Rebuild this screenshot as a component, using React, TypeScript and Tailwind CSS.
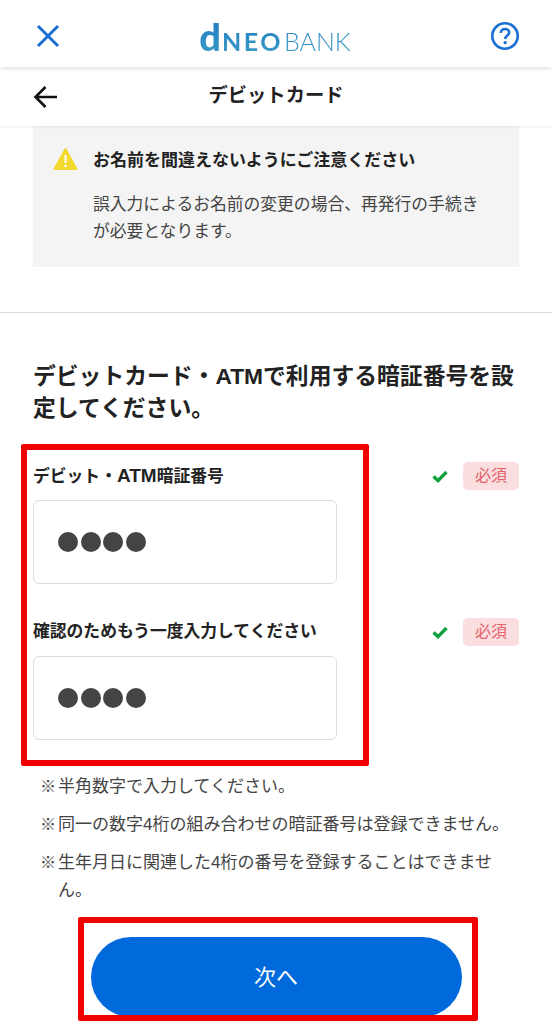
import React from 'react';

const font = { fontFamily: '"Liberation Sans", "Noto Sans CJK JP", sans-serif' };

const notes = [
  '半角数字で入力してください。',
  '同一の数字4桁の組み合わせの暗証番号は登録できません。',
  '生年月日に関連した4桁の番号を登録することはできません。',
];

function PinField({ label }: { label: React.ReactNode }) {
  return (
    <div>
      <div className="flex h-[28px] items-center justify-between">
        <span className="text-[16.8px] font-bold text-[#222]">{label}</span>
        <div className="flex items-center gap-[15px]">
          <svg width="16" height="13" viewBox="0 0 16 13" fill="none">
            <path d="M1.5 6.6 L6 10.6 L14.5 2" stroke="#0fa23c" strokeWidth="3.4" />
          </svg>
          <span className="flex h-[28px] w-[56px] items-center justify-center rounded-[5px] bg-[#fbdfe0] text-[16px] text-[#e5646c]">
            必須
          </span>
        </div>
      </div>
      <div className="mt-[10px] flex h-[84px] w-[304px] items-center gap-[2.5px] rounded-[6px] border-[1.5px] border-[#dedede] bg-white pl-[24px]">
        {[0, 1, 2, 3].map((i) => (
          <div key={i} className="h-[20px] w-[20px] rounded-full bg-[#444]" />
        ))}
      </div>
    </div>
  );
}

export default function App() {
  return (
    <div className="relative h-[1024px] w-[552px] overflow-hidden bg-white" style={font}>
      {/* top bar */}
      <header className="relative z-10 flex h-[67px] items-center justify-between bg-white pl-[36px] pr-[32px] pt-[5px] shadow-[0_1px_5px_rgba(0,0,0,0.16)]">
        <svg width="24" height="24" viewBox="0 0 24 24" fill="none">
          <path d="M2 2 L22 22 M22 2 L2 22" stroke="#1a6fd2" strokeWidth="3" />
        </svg>
        <div className="flex items-baseline bg-gradient-to-b from-[#1f78c0] to-[#3a9cc8] bg-clip-text text-transparent">
          <span className="text-[38px] leading-none font-black" style={{ fontFamily: 'Lato, sans-serif' }}>d</span>
          <span className="ml-[1px] text-[25px] leading-none font-bold tracking-[2.5px]" style={{ fontFamily: 'Lato, sans-serif' }}>NEO</span>
          <span className="ml-[1px] text-[25px] leading-none font-light" style={{ fontFamily: 'Lato, sans-serif' }}>BANK</span>
        </div>
        <svg width="30" height="30" viewBox="0 0 30 30" fill="none">
          <circle cx="15" cy="15" r="12.7" stroke="#1a6fd2" strokeWidth="2.6" />
          <path d="M10.8 12 C10.8 9.4 12.8 8 15 8 C17.4 8 19.2 9.5 19.2 11.6 C19.2 14.4 15.2 14.6 15.2 18" stroke="#1a6fd2" strokeWidth="2.6" />
          <circle cx="15.2" cy="21.6" r="1.7" fill="#1a6fd2" />
        </svg>
      </header>

      {/* sub header */}
      <div className="relative z-[5] flex h-[59px] items-center justify-center bg-white shadow-[0_1px_3px_rgba(0,0,0,0.08)]">
        <svg className="absolute left-[33px] top-[18px]" width="25" height="24" viewBox="0 0 25 24" fill="none">
          <path d="M24 12 H3 M12.5 2 L2.5 12 L12.5 22" stroke="#111" strokeWidth="2.6" />
        </svg>
        <h1 className="text-[19.3px] font-bold text-[#222]">デビットカード</h1>
      </div>

      {/* notice */}
      <div className="mx-[33px] flex h-[141px] bg-[#f4f4f4] pl-[20px] pt-[20px]">
        <svg className="mt-[1px]" width="25" height="24" viewBox="0 0 25 24">
          <path d="M12.5 2 L23.5 22 H1.5 Z" fill="#f3d92f" stroke="#f3d92f" strokeWidth="2" strokeLinejoin="round" />
          <path d="M12.5 8 V16" stroke="#fff" strokeWidth="2" />
          <circle cx="12.5" cy="19" r="1.2" fill="#fff" />
        </svg>
        <div className="ml-[15px] w-[395px]">
          <p className="text-[17px] leading-[30px] font-bold text-[#222]">お名前を間違えないようにご注意ください</p>
          <p className="mt-[15px] text-[16.8px] leading-[27px] text-[#444]">
            誤入力によるお名前の変更の場合、再発行の手続きが必要となります。
          </p>
        </div>
      </div>

      <div className="mt-[45px] h-[1px] bg-[#dcdcdc]" />

      <main className="px-[33px] pt-[47px]">
        <h2 className="text-[22.8px] leading-[32px] font-bold text-[#222]">
          デビットカード・ATMで利用する暗証番号を設定してください。
        </h2>

        <div className="mt-[38px] flex flex-col gap-[34px]">
          <PinField label={<>デビット・<span className="text-[19px]">ATM</span>暗証番号</>} />
          <PinField label="確認のためもう一度入力してください" />
        </div>

        <ul className="mt-[33px] flex flex-col gap-[10px] pl-[7px] text-[17px] leading-[28px] text-[#444]">
          {notes.map((note) => (
            <li key={note} className="flex">
              <span className="w-[18px] shrink-0 text-[16px]">※</span>
              <span>{note}</span>
            </li>
          ))}
        </ul>

        <button className="mx-auto mt-[32px] flex h-[80px] w-[371px] items-center justify-center rounded-full bg-[#0069dc] text-[22px] text-white">
          次へ
        </button>
      </main>

      {/* red annotation frames */}
      <div className="absolute left-[21px] top-[444px] h-[322px] w-[348px] rounded-[2px] border-[6px] border-[#f00000]" />
      <div className="absolute left-[78px] top-[917px] h-[104px] w-[400px] rounded-[2px] border-[6px] border-[#f00000]" />
    </div>
  );
}
